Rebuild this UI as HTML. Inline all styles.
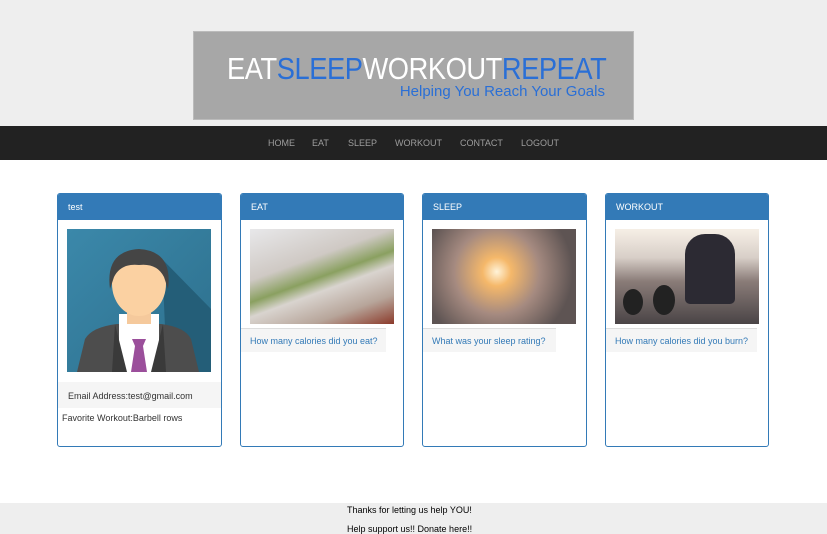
<!DOCTYPE html>
<html><head><meta charset="utf-8"><style>
*{margin:0;padding:0;box-sizing:border-box}
body{width:827px;height:534px;overflow:hidden;background:#fff;font-family:"Liberation Sans",Arial,sans-serif;font-size:9px;color:#333;position:relative}
.top{position:absolute;left:0;top:0;width:827px;height:126px;background:#eee}
.banner{position:absolute;left:193px;top:31px;width:441px;height:89px;background:#a7a7a7;border:1px solid #bbb}
.t1{position:absolute;left:33px;top:19px;font-size:31px;letter-spacing:-0.5px;color:#fff;white-space:nowrap;font-family:"Liberation Sans",sans-serif;transform:scaleX(0.88);transform-origin:0 0}
.t1 b{font-weight:normal;color:#2a6fd6}
.t2{position:absolute;right:28px;top:51px;font-size:15px;color:#2a6fd6;white-space:nowrap}
.nav{position:absolute;left:0;top:126px;width:827px;height:34px;background:#222;text-align:center;font-size:9px;color:#9d9d9d}
.nav span{position:absolute;top:12px}
.panel{position:absolute;top:193px;height:254px;border:1px solid #337ab7;border-radius:3px;background:#fff;overflow:hidden}
.ph{height:26px;background:#337ab7;color:#fff;padding:8px 0 0 10px;font-size:9px}
.img{position:absolute;left:9px;top:35px;width:144px}
.link{position:absolute;left:0;top:134px;height:24px;background:#f5f5f5;color:#337ab7;padding:7px 0 0 9px;font-size:9px;border-top:1px solid #ddd}
.foot{position:absolute;left:0;top:503px;width:827px;height:31px;background:#eee;color:#000;font-size:9px}
</style></head><body>
<div class="top"></div>
<div class="banner"><div class="t1">EAT<b>SLEEP</b>WORKOUT<b>REPEAT</b></div><div class="t2">Helping You Reach Your Goals</div></div>
<div class="nav"><span style="left:268px">HOME</span><span style="left:312px">EAT</span><span style="left:348px">SLEEP</span><span style="left:395px">WORKOUT</span><span style="left:460px">CONTACT</span><span style="left:521px">LOGOUT</span></div>

<div class="panel" style="left:57px;width:165px">
<div class="ph">test</div>
<svg class="img" style="left:9px;top:35px" width="144" height="143" viewBox="0 0 144 143">
<defs><linearGradient id="g" x1="0" y1="0" x2="1" y2="1"><stop offset="0" stop-color="#3b88aa"/><stop offset="1" stop-color="#2d6f8c"/></linearGradient></defs>
<rect width="144" height="143" fill="url(#g)"/>
<polygon points="95,30 144,80 144,143 100,143" fill="#245e78"/>
<path d="M10 143 L18 110 Q25 98 50 95 L94 95 Q118 98 124 110 L132 143Z" fill="#4d4d4d"/>
<rect x="52" y="85" width="40" height="58" fill="#fff"/>
<path d="M65 110 L79 110 L76 117 L80 143 L64 143 L68 117Z" fill="#9b4f9b"/>
<path d="M48 95 L60 143 L45 143Z M96 95 L84 143 L99 143Z" fill="#3a3a3a"/>
<rect x="60" y="75" width="24" height="20" fill="#f5c99c"/>
<ellipse cx="72" cy="55" rx="27" ry="32" fill="#fbd1a2"/>
<path d="M43 60 Q38 22 72 20 Q106 22 101 60 L97 48 Q90 34 72 36 Q54 34 47 48Z" fill="#454545"/>
</svg>
<div style="position:absolute;left:0;top:188px;width:164px;height:26px;background:#f5f5f5;padding:9px 0 0 10px">Email Address:test@gmail.com</div>
<div style="position:absolute;left:4px;top:219px">Favorite Workout:Barbell rows</div>
</div>

<div class="panel" style="left:240px;width:164px">
<div class="ph">EAT</div>
<div class="img" style="height:95px;background:linear-gradient(160deg,#e8e8ea 0%,#cfc9c4 35%,#8aa060 50%,#d9d4cf 60%,#b7a59a 80%,#8b3a2a 100%)"></div>
<div class="link" style="width:145px">How many calories did you eat?</div>
</div>

<div class="panel" style="left:422px;width:165px">
<div class="ph">SLEEP</div>
<div class="img" style="height:95px;background:radial-gradient(circle at 45% 45%,#fff3d8 0,#f5b86a 15%,#a58a80 45%,#5e5453 80%),#6a5f5e"></div>
<div class="link" style="width:133px">What was your sleep rating?</div>
</div>

<div class="panel" style="left:605px;width:164px">
<div class="ph">WORKOUT</div>
<div class="img" style="height:95px;background:linear-gradient(180deg,#f6efe6 0%,#d8cfc8 30%,#8a7c78 55%,#4a4446 100%)">
<div style="position:absolute;left:8px;top:60px;width:20px;height:26px;border-radius:50%;background:#222"></div>
<div style="position:absolute;left:38px;top:56px;width:22px;height:30px;border-radius:50%;background:#222"></div>
<div style="position:absolute;left:70px;top:5px;width:50px;height:70px;background:#2c2a33;border-radius:20px 20px 5px 5px"></div>
</div>
<div class="link" style="width:151px">How many calories did you burn?</div>
</div>

<div class="foot"><div style="position:absolute;left:347px;top:2px">Thanks for letting us help YOU!</div><div style="position:absolute;left:347px;top:21px">Help support us!! Donate here!!</div></div>
</body></html>
